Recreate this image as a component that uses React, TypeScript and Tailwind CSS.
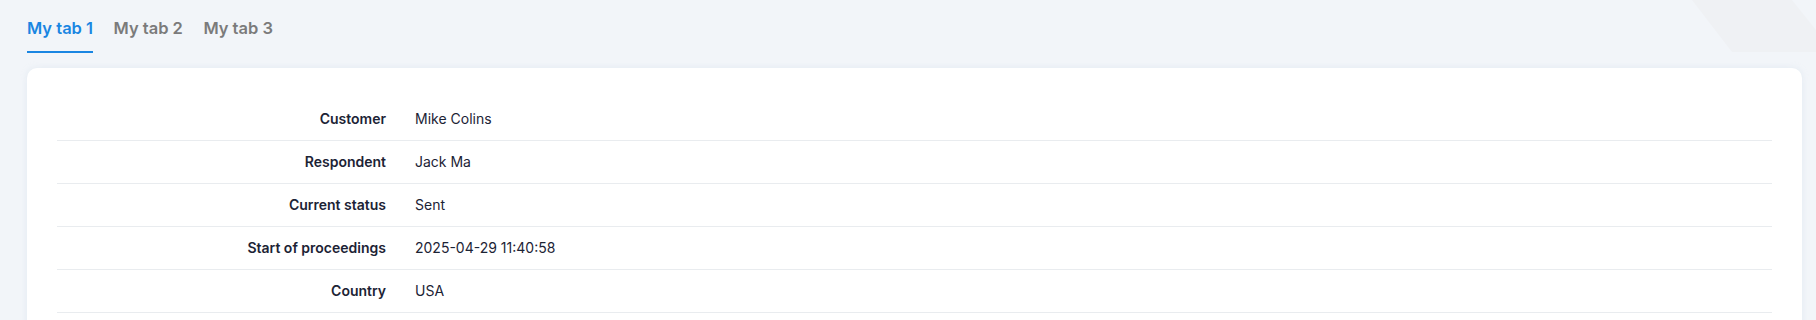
import { useState } from "react";

const rows = [
  { label: "Customer", value: "Mike Colins" },
  { label: "Respondent", value: "Jack Ma" },
  { label: "Current status", value: "Sent" },
  { label: "Start of proceedings", value: "2025-04-29 11:40:58" },
  { label: "Country", value: "USA" },
];

const tabs = ["My tab 1", "My tab 2", "My tab 3"];

export default function App() {
  const [active, setActive] = useState(0);

  return (
    <div className="relative min-h-screen overflow-hidden bg-[#f2f5f9] pl-[27px] pr-[14px] pt-4 font-['Inter',sans-serif]">
      {/* faint background shape, top right */}
      <svg
        className="pointer-events-none absolute right-0 top-0"
        width="124"
        height="52"
        viewBox="0 0 124 52"
      >
        <polygon points="0,0 100,0 124,30 124,52 40,52" fill="#eff1f4" />
      </svg>

      <nav className="relative flex gap-[20.5px]">
        {tabs.map((t, i) => (
          <button
            key={t}
            onClick={() => setActive(i)}
            className={
              i === active
                ? "border-b-2 border-[#1a86e2] pb-[11px] text-[16.5px] font-semibold leading-6 text-[#1a86e2]"
                : "border-b-2 border-transparent pb-[11px] text-[16.5px] font-semibold leading-6 text-[#7b7b7b]"
            }
          >
            {t}
          </button>
        ))}
      </nav>

      <section className="relative mt-[15px] rounded-[10px] bg-white px-[30px] pb-[30px] pt-[30px] shadow-[0_0_6px_rgba(200,215,230,0.35)]">
        {rows.map((r) => (
          <div
            key={r.label}
            className="flex gap-[29px] border-b border-[#e9ecef] py-[11px] text-sm leading-5"
          >
            <div className="w-[329px] shrink-0 text-right font-semibold text-[#1c2335]">
              {r.label}
            </div>
            <div className="text-[#1c2335]">{r.value}</div>
          </div>
        ))}
      </section>
    </div>
  );
}
